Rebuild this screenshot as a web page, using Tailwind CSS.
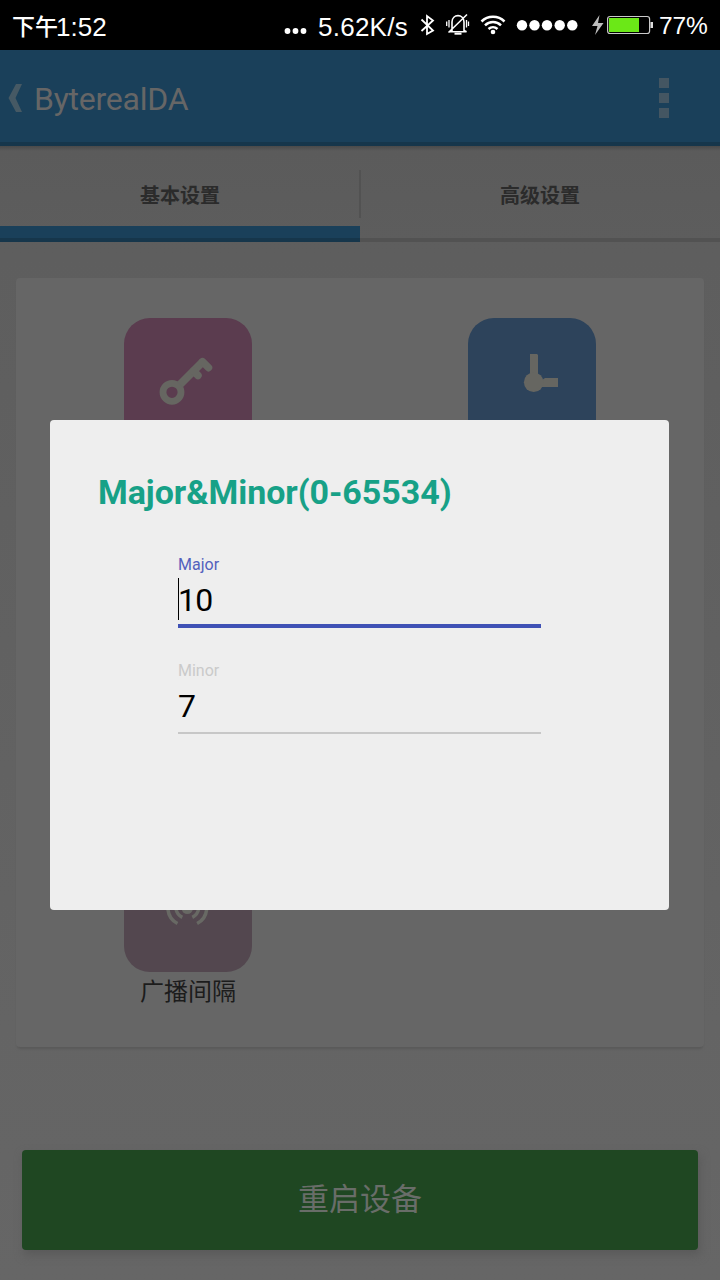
<!DOCTYPE html>
<html lang="zh-CN">
<head>
<meta charset="utf-8">
<title>ByterealDA</title>
<script src="https://cdn.jsdelivr.net/npm/@tailwindcss/browser@4"></script>
</head>
<body class="bg-black">
<div class="relative flex h-[1280px] w-[720px] flex-col overflow-hidden bg-linear-to-b from-[#5c5c5c] to-[#666666] font-['Roboto','Noto_Sans_CJK_SC',sans-serif]">

  <!-- Status bar -->
  <div class="flex h-[50px] shrink-0 items-center bg-black pl-3 font-['Liberation_Sans','Noto_Sans_CJK_SC',sans-serif] text-[26px] leading-[50px] whitespace-nowrap text-white">
    <div class="flex w-[272px] pt-[3px]"><span class="text-[23px] font-medium">下午</span><span class="-ml-0.5">1:52</span></div>
    <svg class="mt-[12px] h-2 w-[24px] shrink-0" viewBox="0 0 24 8" fill="#fff"><circle cx="3.5" cy="4" r="2.9"/><circle cx="11.5" cy="4" r="2.9"/><circle cx="19.5" cy="4" r="2.9"/></svg>
    <div class="ml-[10px] w-[102px] shrink-0 pt-[3px] tracking-[0.25px]">5.62K/s</div>
    <svg class="h-[50px] w-[240px] shrink-0" viewBox="420 0 240 50" fill="none" stroke="#fff">
      <path d="M421.5 19.500 433 30.500 427 34V16l6 4.500-11.500 10.500" stroke-width="1.8"/>
      <path d="M452 30.500V22c0-8.500 12-8.500 12 0v8.500l2.500 1.300h-17zM448.500 32.500 467 14.500" stroke-width="1.600"/>
      <path d="M454.500 33.700h7" stroke-width="2"/>
      <path d="M449 20v7.500M446.700 21.500v4.500M466.500 20v7.500M468.500 21.500v4.500" stroke-width="1.300"/>
      <path d="M481.500 21.500a16.500 16.500 0 0 1 23 0M485 25.300a11.500 11.500 0 0 1 16 0M488.500 29a6.700 6.700 0 0 1 9 0" stroke-width="2.500"/>
      <circle cx="493" cy="32" r="2.300" fill="#fff" stroke="none"/>
      <g fill="#fff" stroke="none"><circle cx="522" cy="25.300" r="5.200"/><circle cx="534.500" cy="25.300" r="5.200"/><circle cx="547" cy="25.300" r="5.200"/><circle cx="559.700" cy="25.300" r="5.200"/><circle cx="572.300" cy="25.300" r="5.200"/></g>
      <path d="M599.500 15 592 26h5.500l-2.500 9 8.500-12h-5.500z" fill="#bdbdbd" stroke="none"/>
      <rect x="607.600" y="16.500" width="42" height="17" rx="2.500" stroke="#c9c9c9" stroke-width="1.200"/>
      <path d="M650.500 22h2.500v6h-2.500z" fill="#ddd" stroke="none"/>
      <path d="M609 18h30v14h-30z" fill="#6be817" stroke="none"/>
    </svg>
    <div class="-ml-[1px] pt-[1px] text-[24.500px] tracking-[-0.1px]">77%</div>
  </div>

  <!-- Action bar -->
  <header class="flex h-[96px] shrink-0 items-center border-b-4 border-[#16364b] bg-[#1a405a] pl-2">
    <svg class="mt-1 h-7 w-[15px]" viewBox="0 0 15 28"><path d="M8 0h6L7.500 14 14 28H8L.500 14z" fill="#465964"/></svg>
    <h1 class="ml-[11px] pt-[6px] text-[32px] leading-none tracking-[-0.25px] text-[#666]">ByterealDA</h1>
    <div class="mr-[51px] ml-auto flex flex-col gap-[5px] pt-1"><i class="size-2.5 bg-[#445662]"></i><i class="size-2.5 bg-[#445662]"></i><i class="size-2.5 bg-[#445662]"></i></div>
  </header>

  <!-- Tabs -->
  <nav class="flex h-[96px] shrink-0 bg-linear-to-b from-[#4a4a4a] via-[#5b5b5b] via-[5px] to-[#5d5d5d] text-xl font-bold text-[#2b2b2b]">
    <div class="flex w-[360px] flex-col">
      <div class="flex h-20 items-center">
        <span class="w-[359px] pt-[19px] pl-px text-center leading-none">基本设置</span><i class="mt-4 h-12 w-px bg-[#525252]"></i>
      </div>
      <div class="h-4 border-b-4 border-[#16364b] bg-[#1a405a]"></div>
    </div>
    <div class="flex w-[360px] flex-col border-b-4 border-[#525252]">
      <div class="flex h-20 items-center"><i class="mt-4 h-12 w-px bg-[#525252]"></i><span class="w-[359px] pt-[19px] pr-px text-center leading-none">高级设置</span></div>
    </div>
  </nav>

  <!-- Settings card -->
  <main class="mx-4 mt-9 grid h-[769px] shrink-0 grid-cols-2 content-start gap-y-[135px] rounded-[4px] bg-[#666] pt-10 shadow-[0_3px_2px_-1px_#5a5a5a]">
    <div class="flex h-32 justify-center">
      <svg class="size-32" viewBox="0 0 128 128"><rect width="128" height="128" rx="26" fill="#5b3c4f"/><g fill="none" stroke="#666661"><circle cx="48" cy="74.300" r="9" stroke-width="6.800"/><path d="M56 66.500 79 43.500" stroke-width="8"/><path d="M78.500 43.700l6 6M69.500 53l4.500 4.500" stroke-width="7.500" stroke-linecap="round"/></g></svg>
    </div>
    <div class="flex h-32 justify-center">
      <svg class="size-32" viewBox="0 0 128 128"><rect width="128" height="128" rx="26" fill="#2d435b"/><path d="M62 36h7l1 1v21h-8zM70 61l4 1 3-2h13v9H72z" fill="#666661"/><circle cx="65.700" cy="64.300" r="9.800" fill="#666661"/></svg>
    </div>
    <div class="h-32"></div>
    <div class="h-32"></div>
    <div class="flex h-32 flex-col items-center">
      <svg class="size-32 shrink-0" viewBox="0 0 128 128"><rect width="128" height="128" rx="26" fill="#53474f"/><circle cx="63.300" cy="64.500" r="5.500" fill="#686964"/><path d="M55 55a11.500 11.500 0 0 0 3.300 18.300M71.600 55a11.500 11.500 0 0 1-3.300 18.300M50 50a18 18 0 0 0 3.500 29.500M76.600 50a18 18 0 0 1-3.500 29.500" fill="none" stroke="#686964" stroke-width="3.500"/></svg>
      <span class="pt-2 text-2xl leading-6 whitespace-nowrap text-[#1c1c1c]">广播间隔</span>
    </div>
  </main>

  <button class="mx-[22px] mt-[103px] h-[100px] shrink-0 rounded-[4px] bg-[#1f4722] pt-px text-[31px] text-[#696d69] shadow-[2px_5px_10px_#5a5a5a]">重启设备</button>

  <!-- Dialog over the page -->
  <section class="absolute top-[420px] left-[50px] flex h-[490px] w-[619px] flex-col rounded-[4px] bg-[#eee] pt-[52px] pl-12">
    <h2 class="text-[34px] leading-10 font-bold tracking-[-0.05px] whitespace-nowrap text-[#17a187]">Major&amp;Minor(0-65534)</h2>
    <div class="ml-20 flex w-[363px] flex-col pt-[43px]">
      <label class="h-5 text-[16px] leading-5 text-[#5361bd]">Major</label>
      <div class="mt-[3px] flex h-[42px] items-center"><i class="h-[42px] w-px shrink-0 bg-black"></i><span class="-ml-px pt-px text-[32px] leading-none tracking-[-0.8px] text-black">10</span></div>
      <div class="mt-1 h-1 bg-[#3f51b5]"></div>
      <label class="mt-[33px] h-5 text-[16px] leading-5 text-[#cacaca]">Minor</label>
      <div class="mt-[3px] flex h-[42px] items-center pt-px text-[32px] leading-none text-black">7</div>
      <div class="mt-[6px] h-0.5 bg-[#c7c7c7]"></div>
    </div>
  </section>
</div>
</body>
</html>
